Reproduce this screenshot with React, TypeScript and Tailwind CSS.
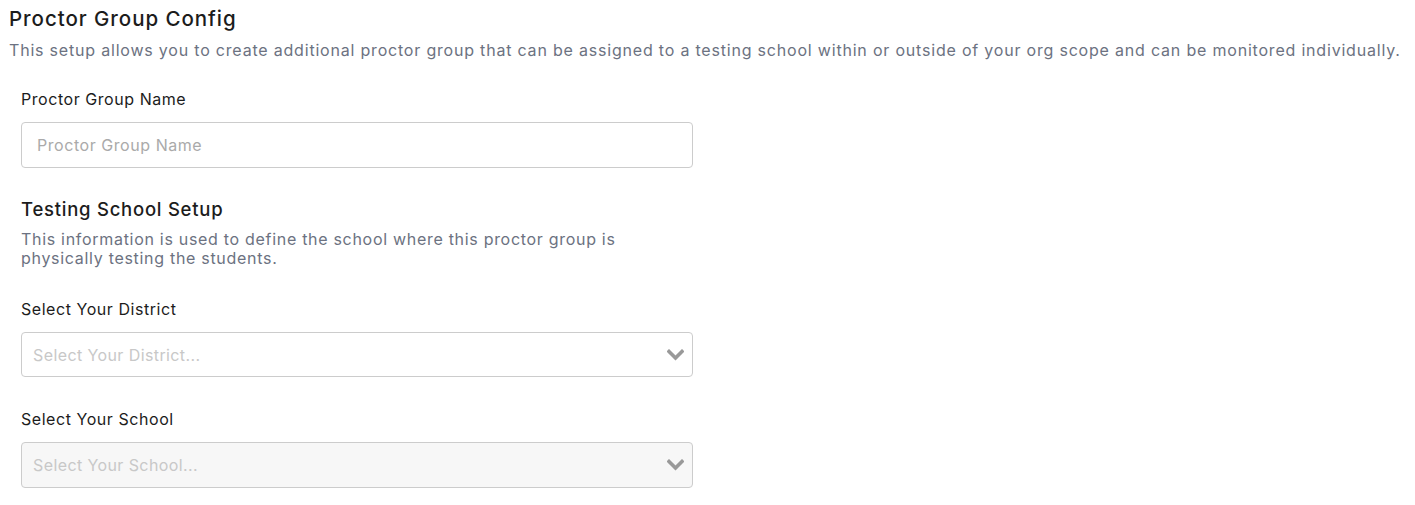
const font = { fontFamily: 'Inter, "DejaVu Sans", sans-serif' };

function Chevron() {
  return (
    <svg width="17" height="12" viewBox="0 0 17 12" className="text-[#999999]">
      <path d="M2 2.5 L8.5 9 L15 2.5" fill="none" stroke="currentColor" strokeWidth="3.6" strokeLinecap="square" />
    </svg>
  );
}

function SelectBox({ placeholder, disabled }: { placeholder: string; disabled?: boolean }) {
  return (
    <div
      className={`flex items-center justify-between w-[672px] border border-[#cccccc] rounded-[4px] pl-[11px] pr-[8px] ${
        disabled ? 'bg-[#f7f7f7] h-[46px]' : 'bg-white h-[45px]'
      }`}
    >
      <span className="text-[16px] text-[#c8c8c8] tracking-[0.4px]">{placeholder}</span>
      <Chevron />
    </div>
  );
}

export default function App() {
  return (
    <div className="bg-white min-h-screen text-[#1c1c1c]" style={font}>
      <div className="px-[9px] pt-[6px]">
        <h1 className="text-[20.5px] font-medium leading-[26px] tracking-[0.95px]">Proctor Group Config</h1>
        <p className="text-[16px] text-[#6c7281] mt-[8px] leading-[20px] tracking-[0.8px]">
          This setup allows you to create additional proctor group that can be assigned to a testing school within or
          outside of your org scope and can be monitored individually.
        </p>

        <div className="px-[12px] pt-[29px] w-[696px]">
          <label className="block text-[16px] leading-[20px] tracking-[0.55px]">Proctor Group Name</label>
          <input
            className="mt-[13px] block h-[46px] w-[672px] border border-[#cccccc] rounded-[4px] px-[15px] text-[16px] tracking-[0.55px] placeholder:text-[#aaaaaa] outline-none"
            placeholder="Proctor Group Name"
          />

          <h2 className="mt-[29px] text-[18.5px] font-medium leading-[24px] tracking-[0.75px]">Testing School Setup</h2>
          <p className="mt-[9px] text-[16px] text-[#6c7281] leading-[19px] tracking-[0.7px]">
            This information is used to define the school where this proctor group is physically testing the students.
          </p>

          <label className="block mt-[31px] text-[16px] leading-[20px] tracking-[0.55px]">Select Your District</label>
          <div className="mt-[13px]">
            <SelectBox placeholder="Select Your District..." />
          </div>

          <label className="block mt-[32px] text-[16px] leading-[20px] tracking-[0.55px]">Select Your School</label>
          <div className="mt-[13px]">
            <SelectBox placeholder="Select Your School..." disabled />
          </div>
        </div>
      </div>
    </div>
  );
}
